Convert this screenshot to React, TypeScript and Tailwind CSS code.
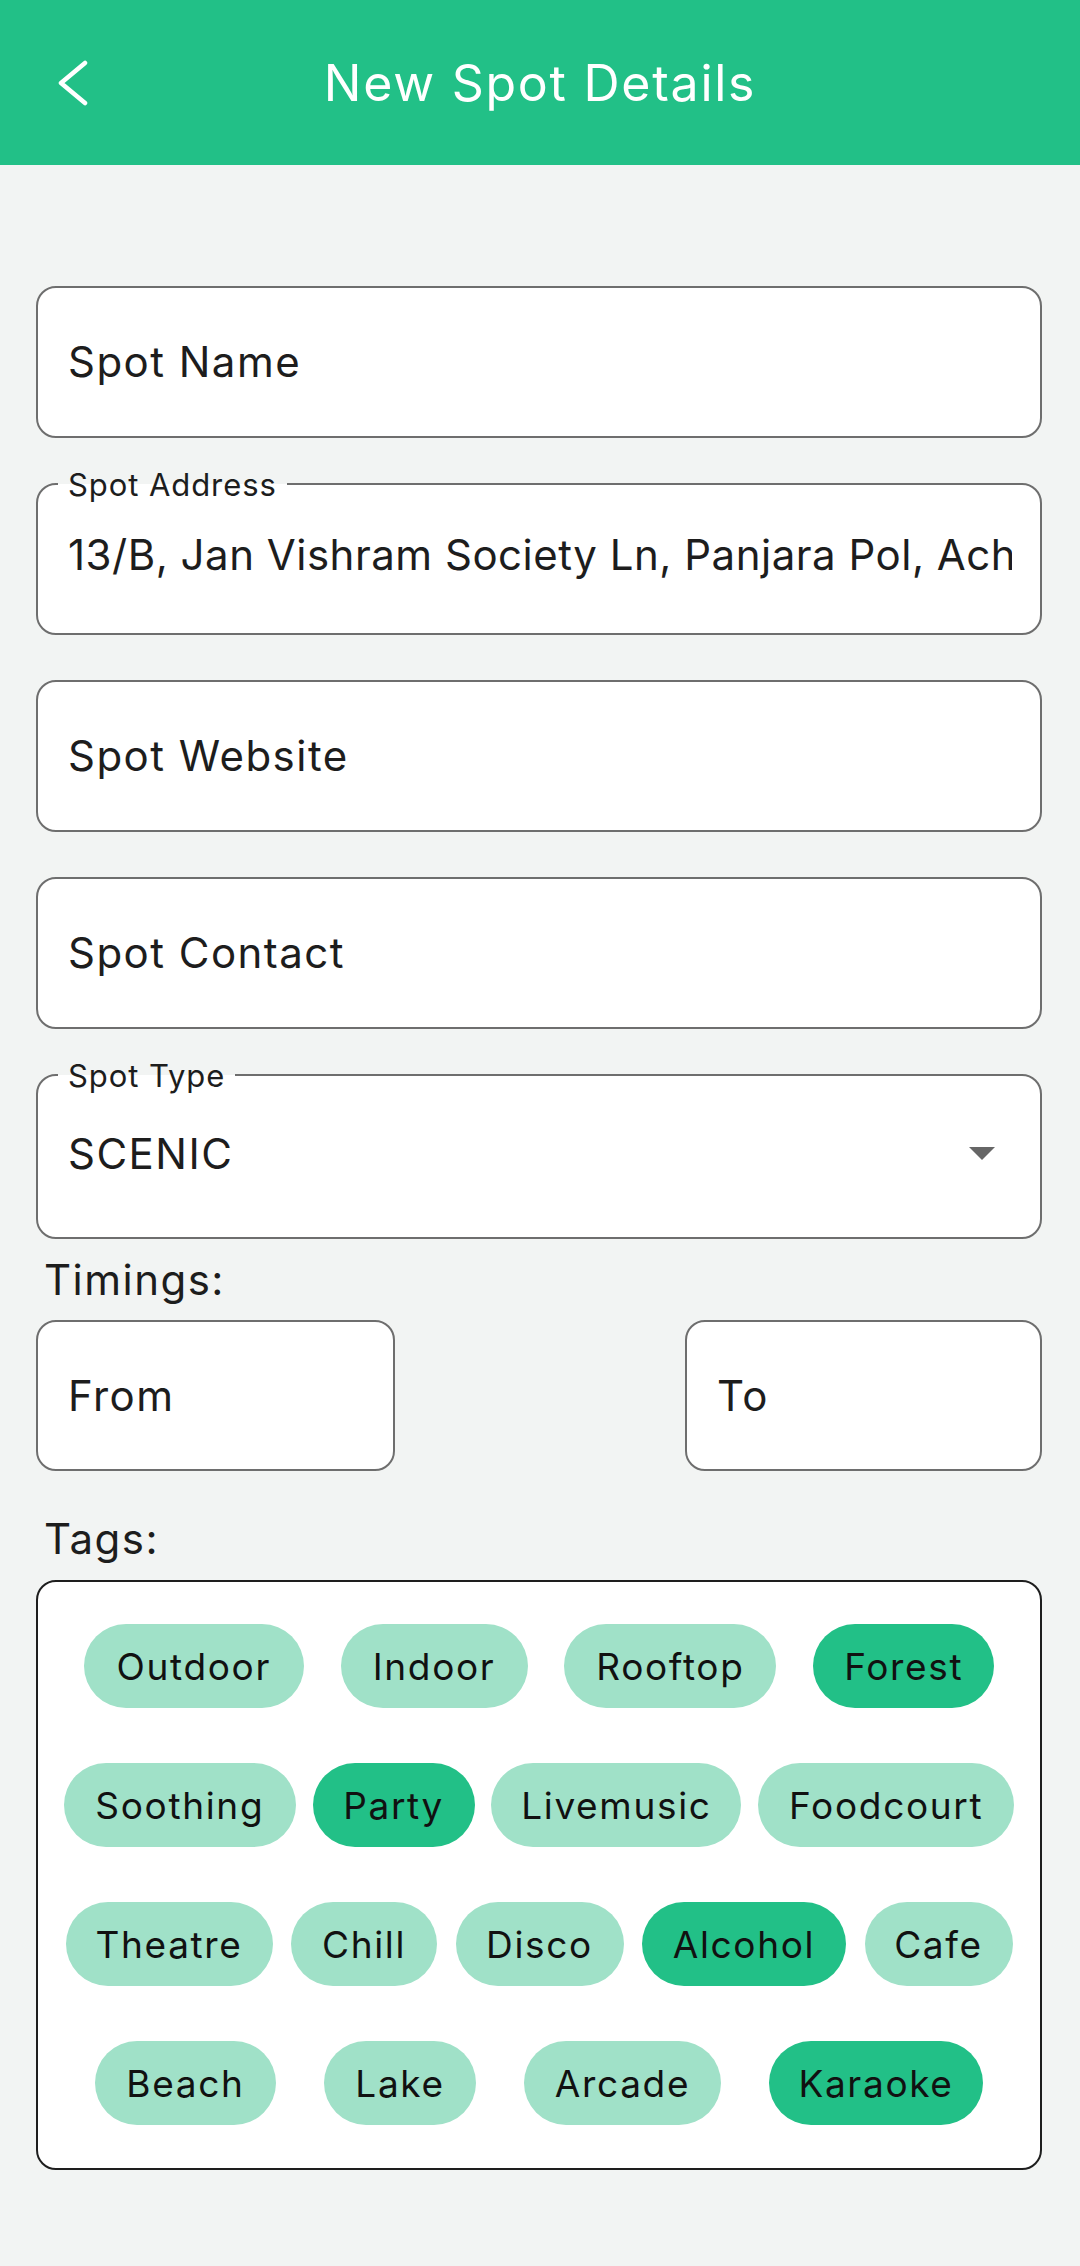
import React from "react";

type Tag = { name: string; w: string; on: boolean };

const rows: Tag[][] = [
  [
    { name: "Outdoor", w: "w-[220px]", on: false },
    { name: "Indoor", w: "w-[187px]", on: false },
    { name: "Rooftop", w: "w-[212px]", on: false },
    { name: "Forest", w: "w-[181px]", on: true },
  ],
  [
    { name: "Soothing", w: "w-[232px]", on: false },
    { name: "Party", w: "w-[162px]", on: true },
    { name: "Livemusic", w: "w-[250px]", on: false },
    { name: "Foodcourt", w: "w-[256px]", on: false },
  ],
  [
    { name: "Theatre", w: "w-[207px]", on: false },
    { name: "Chill", w: "w-[146px]", on: false },
    { name: "Disco", w: "w-[168px]", on: false },
    { name: "Alcohol", w: "w-[204px]", on: true },
    { name: "Cafe", w: "w-[148px]", on: false },
  ],
  [
    { name: "Beach", w: "w-[181px]", on: false },
    { name: "Lake", w: "w-[152px]", on: false },
    { name: "Arcade", w: "w-[197px]", on: false },
    { name: "Karaoke", w: "w-[214px]", on: true },
  ],
];

function Label({ text }: { text: string }) {
  return (
    <span className="absolute top-[-18px] left-[20px] h-[34px] px-[10px] flex items-center text-[31px] leading-none tracking-[0.03em] text-[#1d1d1d] bg-[linear-gradient(to_bottom,#f2f4f3_50%,#ffffff_50%)]">
      {text}
    </span>
  );
}

function Field({
  text,
  label,
  pb = "",
  track = "tracking-[0.035em]",
}: {
  text: string;
  label?: string;
  pb?: string;
  track?: string;
}) {
  return (
    <div className={`relative h-[152px] rounded-[20px] border-2 border-[#6e6e6e] bg-white flex items-center pl-[30px] pr-[28px] ${pb}`}>
      {label && <Label text={label} />}
      <span className={`block overflow-hidden whitespace-nowrap text-[42px] leading-[1.4] ${track} text-[#1d1d1d]`}>{text}</span>
    </div>
  );
}

export default function App() {
  return (
    <div className="min-h-[2266px] bg-[#f2f4f3] font-['Inter','Liberation_Sans',sans-serif]">
      <header className="h-[165px] bg-[#22c087] flex items-center">
        <div className="w-[120px] pl-[58px] flex items-center">
          <svg width="30" height="46" viewBox="0 0 30 46" fill="none">
            <polyline points="27,3 3,23 27,43" stroke="#ffffff" strokeWidth="4.5" strokeLinecap="round" strokeLinejoin="round" />
          </svg>
        </div>
        <h1 className="flex-1 text-center text-white text-[50px] leading-none tracking-[0.035em] font-normal">New Spot Details</h1>
        <div className="w-[120px]" />
      </header>

      <main className="pl-[36px] pr-[38px] pt-[121px] flex flex-col">
        <div className="flex flex-col gap-[45px]">
          <Field text="Spot Name" />
          <Field
            text="13/B, Jan Vishram Society Ln, Panjara Pol, Acharya"
            label="Spot Address"
            pb="pb-[8px]"
            track="tracking-[0.012em]"
          />
          <Field text="Spot Website" />
          <Field text="Spot Contact" />
          <div className="relative h-[165px] rounded-[20px] border-2 border-[#6e6e6e] bg-white flex items-center justify-between pl-[30px] pr-[45px] pb-[6px]">
            <Label text="Spot Type" />
            <span className="text-[42px] leading-none tracking-[0.035em] text-[#1d1d1d]">SCENIC</span>
            <svg width="26" height="13" viewBox="0 0 26 13">
              <polygon points="0,0 26,0 13,13" fill="#666666" />
            </svg>
          </div>
        </div>

        <div className="h-[81px] flex items-center pl-[8px] text-[42px] leading-none tracking-[0.035em] text-[#1d1d1d]">Timings:</div>

        <div className="flex justify-between">
          <div className="w-[359px] h-[151px] rounded-[20px] border-2 border-[#6e6e6e] bg-white flex items-center pl-[30px]">
            <span className="text-[42px] leading-none tracking-[0.035em] text-[#1d1d1d]">From</span>
          </div>
          <div className="w-[357px] h-[151px] rounded-[20px] border-2 border-[#6e6e6e] bg-white flex items-center pl-[30px]">
            <span className="text-[42px] leading-none tracking-[0.035em] text-[#1d1d1d]">To</span>
          </div>
        </div>

        <div className="mt-[43px] mb-[16px] h-[50px] flex items-center pl-[8px] text-[42px] leading-none tracking-[0.035em] text-[#1d1d1d]">Tags:</div>

        <div className="rounded-[20px] border-2 border-[#1e1e1e] bg-white pt-[42px] pb-[43px] px-[9px] flex flex-col gap-[55px]">
          {rows.map((row, i) => (
            <div key={i} className="flex justify-evenly">
              {row.map((t) => (
                <div
                  key={t.name}
                  className={`${t.w} h-[84px] rounded-full flex items-center justify-center text-[37px] leading-none tracking-[0.045em] text-[#111111] ${t.on ? "bg-[#22c087]" : "bg-[#a0e1c8]"}`}
                >
                  {t.name}
                </div>
              ))}
            </div>
          ))}
        </div>
      </main>
    </div>
  );
}
